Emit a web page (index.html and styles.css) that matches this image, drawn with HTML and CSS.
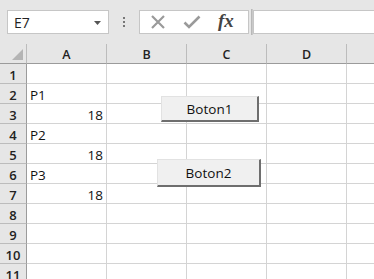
FILE: index.html
```html
<!DOCTYPE html>
<html>
<head>
<meta charset="utf-8">
<link rel="stylesheet" href="styles.css">
</head>
<body>
<div class="app">
  <div class="fbar">
    <div class="namebox"><span>E7</span><svg class="caret" width="7" height="4" viewBox="0 0 7 4"><path d="M0 0H7L3.5 4Z" fill="#555"/></svg></div>
    <div class="dots"><i></i><i></i><i></i></div>
    <div class="fbox">
      <svg class="ic" width="16" height="16" viewBox="0 0 16 16"><path d="M2 2L14 14M14 2L2 14" stroke="#9a9a9a" stroke-width="2.2" fill="none"/></svg>
      <svg class="ic" width="18" height="16" viewBox="0 0 18 16"><path d="M1.5 8.5L6 13L16.5 2.5" stroke="#9a9a9a" stroke-width="2.6" fill="none"/></svg>
      <span class="fx">fx</span>
    </div>
    <div class="grab"></div>
    <div class="finput"></div>
  </div>
  <div class="sheet">
    <div class="corner"><svg width="11" height="11" viewBox="0 0 11 11"><path d="M11 0V11H0Z" fill="#b4b4b4"/></svg></div>
    <div class="ch">A</div><div class="ch">B</div><div class="ch">C</div><div class="ch">D</div><div class="ch last"></div>

    <div class="rh">1</div><div class="c"></div><div class="c"></div><div class="c"></div><div class="c"></div><div class="c last"></div>
    <div class="rh">2</div><div class="c">P1</div><div class="c"></div><div class="c"></div><div class="c"></div><div class="c last"></div>
    <div class="rh">3</div><div class="c num">18</div><div class="c"></div><div class="c"></div><div class="c"></div><div class="c last"></div>
    <div class="rh">4</div><div class="c">P2</div><div class="c"></div><div class="c"></div><div class="c"></div><div class="c last"></div>
    <div class="rh">5</div><div class="c num">18</div><div class="c"></div><div class="c"></div><div class="c"></div><div class="c last"></div>
    <div class="rh">6</div><div class="c">P3</div><div class="c"></div><div class="c"></div><div class="c"></div><div class="c last"></div>
    <div class="rh">7</div><div class="c num">18</div><div class="c"></div><div class="c"></div><div class="c"></div><div class="c last"></div>
    <div class="rh">8</div><div class="c"></div><div class="c"></div><div class="c"></div><div class="c"></div><div class="c last"></div>
    <div class="rh">9</div><div class="c"></div><div class="c"></div><div class="c"></div><div class="c"></div><div class="c last"></div>
    <div class="rh">10</div><div class="c"></div><div class="c"></div><div class="c"></div><div class="c"></div><div class="c last"></div>
    <div class="rh">11</div><div class="c"></div><div class="c"></div><div class="c"></div><div class="c"></div><div class="c last"></div>

    <button class="btn b1">Boton1</button>
    <button class="btn b2">Boton2</button>
  </div>
</div>
</body>
</html>
```

FILE: styles.css
```css
* { box-sizing: border-box; }
html, body { margin: 0; padding: 0; background: #fff; }
body { width: 374px; height: 279px; overflow: hidden; font-family: "Open Sans", "Noto Sans", sans-serif; color: #000; }
.app { width: 374px; height: 279px; overflow: hidden; }

.fbar {
  height: 44px;
  background: #e6e6e6;
  display: flex;
  align-items: flex-start;
  padding-top: 10px;
  padding-left: 7px;
}
.namebox {
  width: 102px; height: 24px;
  background: #fff;
  border: 1px solid #c6c6c6;
  display: flex; align-items: center; justify-content: space-between;
  padding: 1px 7px 0 6px;
  font-size: 14px;
  color: #222;
}
.caret { margin-top: 1px; }
.dots {
  width: 30px; height: 24px;
  display: flex; flex-direction: column; align-items: center; justify-content: center; gap: 2px;
}
.dots i { display: block; width: 2px; height: 2px; background: #777; }
.fbox {
  width: 110px; height: 24px;
  background: #fff;
  border: 1px solid #c6c6c6;
  display: flex; align-items: center;
  padding-left: 10px;
}
.fbox .ic:nth-child(1) { margin-right: 17px; }
.fbox .ic:nth-child(2) { margin-right: 17px; }
.fx {
  font-family: "Liberation Serif", "DejaVu Serif", serif;
  font-style: italic;
  font-weight: bold;
  font-size: 19px;
  color: #444;
  letter-spacing: 0px;
  margin-top: -2px;
}
.grab { width: 2px; height: 26px; margin-left: 2px; margin-top: -1px; background: #c9c9c9; border-left: 1px solid #b8b8b8; }
.finput { flex: 1; height: 24px; background: #fff; border: 1px solid #c6c6c6; border-right: none; }

.sheet {
  position: relative;
  display: grid;
  grid-template-columns: 27px 80px 80px 80px 80px 1fr;
  grid-template-rows: 20px repeat(11, 20px);
}
.corner, .ch, .rh {
  background: #e6e6e6;
  border-right: 1px solid #bcbcbc;
  border-bottom: 1px solid #bcbcbc;
  color: #222;
  display: flex; align-items: center; justify-content: center;
}
.corner { justify-content: flex-end; align-items: flex-end; padding: 0 3px 3px 0; border-bottom-color: #9b9b9b; }
.ch { border-bottom-color: #9b9b9b; font-weight: 600; font-size: 12.5px; padding-top: 2px; }
.ch.last { border-right: none; }
.rh { font-weight: 600; font-size: 13px; border-right-color: #9b9b9b; padding-top: 3px; }
.c {
  border-right: 1px solid #d4d4d4;
  border-bottom: 1px solid #d4d4d4;
  font-size: 13.5px;
  display: flex; align-items: center;
  padding: 3px 3px 0 3px;
  color: #111;
}
.c.num { justify-content: flex-end; }
.c.last { border-right: none; }

.btn {
  position: absolute;
  margin: 0;
  padding: 0;
  background: #f0f0f0;
  border: 1px solid #e2e2e2;
  border-right: 2px solid #6e6e6e;
  border-bottom: 2px solid #6e6e6e;
  font-family: "Open Sans", "Noto Sans", sans-serif;
  font-size: 13.5px;
  color: #111;
}
.b1 { left: 161px; top: 52px; width: 98px; height: 26px; }
.b2 { left: 157px; top: 115px; width: 104px; height: 28px; }
```
